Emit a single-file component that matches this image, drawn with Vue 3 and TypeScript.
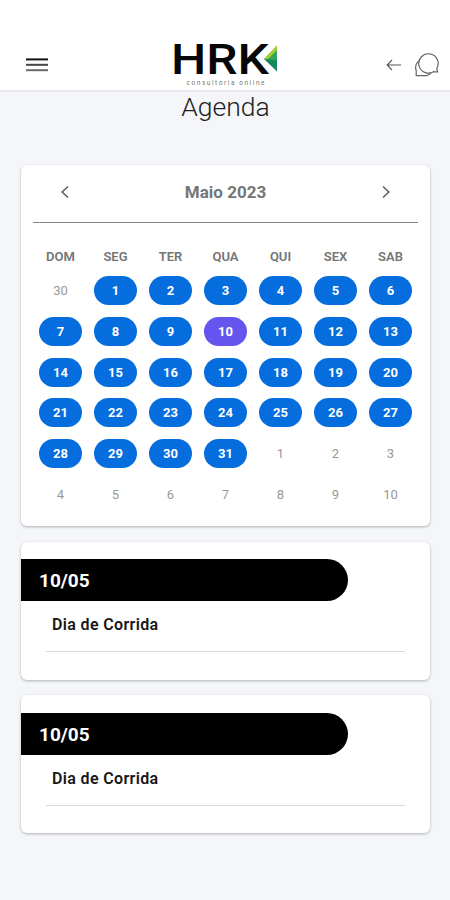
<script setup lang="ts">
interface Day {
  label: number
  kind: 'outside' | 'busy' | 'selected'
}

interface AgendaEvent {
  id: number
  date: string
  title: string
}

const weekdays: string[] = ['DOM', 'SEG', 'TER', 'QUA', 'QUI', 'SEX', 'SAB']

const selectedDay = 10

const days: Day[] = [
  { label: 30, kind: 'outside' },
  ...Array.from({ length: 31 }, (_, i): Day => ({
    label: i + 1,
    kind: i + 1 === selectedDay ? 'selected' : 'busy',
  })),
  ...Array.from({ length: 10 }, (_, i): Day => ({ label: i + 1, kind: 'outside' })),
]

const events: AgendaEvent[] = [
  { id: 1, date: '10/05', title: 'Dia de Corrida' },
  { id: 2, date: '10/05', title: 'Dia de Corrida' },
]
</script>

<template>
  <div class="screen">
    <header class="topbar">
      <button class="icon-button menu" aria-label="Menu">
        <svg width="22" height="16" viewBox="0 0 22 16">
          <path d="M0 2.4H22" stroke="#111" stroke-width="2" />
          <path d="M0 7.8H22" stroke="#444" stroke-width="2" />
          <path d="M0 13.2H22" stroke="#6a6a6a" stroke-width="2" />
        </svg>
      </button>
      <svg class="logo" width="106" height="48" viewBox="0 0 106 48">
        <text class="logo-name" x="-1" y="33" textLength="98" lengthAdjust="spacingAndGlyphs">HRK</text>
        <path d="M105 4.5L91 18L105 31Z" fill="#fff" stroke="#fff" stroke-width="3" />
        <path d="M105 4.5V18H92Z" fill="#57b548" />
        <path d="M92 18L105 9V21Z" fill="#36a65a" />
        <path d="M92 18L105 19V30.5Z" fill="#128a5c" />
        <path d="M105 4.5L92 18L96 18L105 9Z" fill="#a9cb38" />
        <text class="logo-tagline" x="14.5" y="44" textLength="78" lengthAdjust="spacing">consultoria online</text>
      </svg>
      <div class="actions">
        <button class="icon-button" aria-label="Voltar">
          <svg width="16" height="14" viewBox="0 0 16 14" fill="none" stroke="#555" stroke-width="1.2">
            <path d="M1.2 7H15M6 1.8L1.2 7L6 12.2" />
          </svg>
        </button>
        <button class="icon-button" aria-label="Mensagens">
          <svg width="26" height="26" viewBox="0 0 26 26" fill="none" stroke="#666" stroke-width="1.2">
            <path d="M20.3 19.2A9.7 9.7 0 1 1 22.8 16.4L23.6 19.9H19.4" />
            <path d="M4.7 8.8L2.2 12.2L1.5 16L2.2 18.6V23.7H12.7L15.3 22.2L17 20.8" />
          </svg>
        </button>
      </div>
    </header>

    <main class="content">
      <h1 class="title">Agenda</h1>

      <section class="card calendar">
        <div class="month-bar">
          <button class="icon-button" aria-label="Mês anterior">
            <svg width="10" height="14" viewBox="0 0 10 14" fill="none" stroke="#666" stroke-width="1.7">
              <path d="M8 1.5L2.2 7L8 12.5" />
            </svg>
          </button>
          <span class="month">Maio 2023</span>
          <button class="icon-button" aria-label="Próximo mês">
            <svg width="10" height="14" viewBox="0 0 10 14" fill="none" stroke="#666" stroke-width="1.7">
              <path d="M2 1.5L7.8 7L2 12.5" />
            </svg>
          </button>
        </div>
        <div class="weekdays">
          <span v-for="name in weekdays" :key="name">{{ name }}</span>
        </div>
        <div class="days">
          <span v-for="(day, index) in days" :key="index" class="day" :class="day.kind">{{ day.label }}</span>
        </div>
      </section>

      <section v-for="event in events" :key="event.id" class="card event">
        <div class="event-date">{{ event.date }}</div>
        <div class="event-title">{{ event.title }}</div>
      </section>
    </main>
  </div>
</template>

<style>
body {
  margin: 0;
  background: #f4f6fa;
}
</style>

<style scoped>
.screen {
  box-sizing: border-box;
  width: 100%;
  min-height: 900px;
  background: #f4f6fa;
  font-family: Roboto, 'Liberation Sans', sans-serif;
}

.topbar {
  box-sizing: border-box;
  display: grid;
  grid-template-columns: 1fr 106px 1fr;
  align-items: center;
  height: 92px;
  padding: 40px 10px 2px;
  background: #fff;
  border-bottom: 2px solid #e9eaec;
}

.icon-button {
  display: flex;
  padding: 0;
  border: 0;
  background: none;
}

.menu {
  padding-left: 16px;
}

.logo {
  display: block;
  margin-top: 1px;
  overflow: visible;
}

.logo-name {
  font-size: 42.5px;
  font-weight: 500;
  fill: #070707;
}

.logo-tagline {
  font-size: 6.5px;
  fill: #777;
}

.actions {
  display: flex;
  justify-content: flex-end;
  align-items: center;
  gap: 12px;
}

.content {
  display: flex;
  flex-direction: column;
  padding: 0 20px 0 21px;
}

.title {
  margin: 0 0 43px;
  color: #222;
  font-size: 26.5px;
  font-weight: 300;
  line-height: 30px;
  text-align: center;
}

.card {
  box-sizing: border-box;
  background: #fff;
  border-radius: 6px;
  box-shadow: 0 1px 3px rgba(0, 0, 0, 0.28);
}

.calendar {
  height: 361px;
  padding: 0 12px;
}

.month-bar {
  display: flex;
  justify-content: space-between;
  align-items: center;
  box-sizing: border-box;
  height: 58px;
  padding: 0 27px 4px;
  border-bottom: 1px solid #858585;
}

.month {
  color: #757575;
  font-size: 17px;
  font-weight: 700;
}

.weekdays,
.days {
  display: grid;
  grid-template-columns: repeat(7, 55px);
  justify-items: center;
}

.weekdays {
  margin-top: 25px;
  color: #757575;
  font-size: 13px;
  font-weight: 600;
  line-height: 18px;
}

.days {
  grid-auto-rows: 29px;
  row-gap: 11.8px;
  margin-top: 10px;
}

.day {
  width: 43px;
  border-radius: 15px;
  color: #fff;
  font-size: 13px;
  font-weight: 700;
  line-height: 30px;
  text-align: center;
}

.busy {
  background: #056ddd;
}

.selected {
  background: #6654ef;
}

.outside {
  color: #999;
  font-weight: 400;
}

.event {
  height: 138px;
  margin-top: 16px;
  padding-top: 17px;
}

.event + .event {
  margin-top: 15px;
  padding-top: 18px;
}

.event-date {
  box-sizing: border-box;
  width: 327px;
  height: 42px;
  padding-left: 18px;
  border-radius: 0 21px 21px 0;
  background: #000;
  color: #fff;
  font-size: 19px;
  font-weight: 700;
  line-height: 43px;
}

.event-title {
  box-sizing: border-box;
  height: 51px;
  margin: 0 25px;
  padding-left: 6px;
  border-bottom: 1px solid #d9d9d9;
  color: #161616;
  font-size: 16px;
  font-weight: 600;
  letter-spacing: 0.36px;
  line-height: 47px;
}
</style>
